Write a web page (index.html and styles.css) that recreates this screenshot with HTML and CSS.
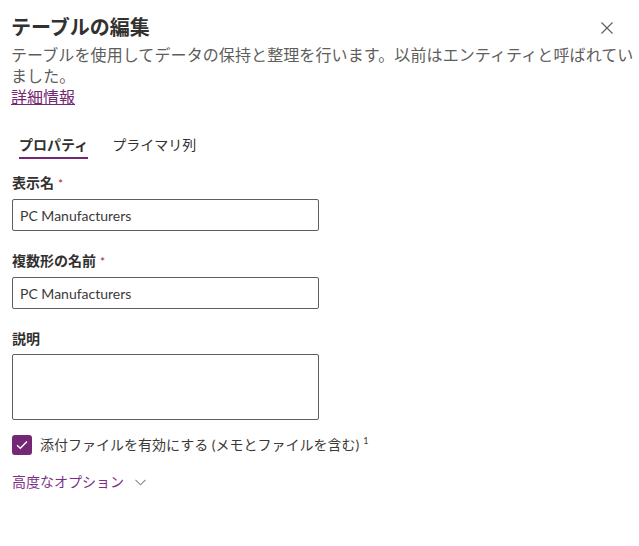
FILE: index.html
```html
<!DOCTYPE html>
<html lang="ja">
<head>
<meta charset="utf-8">
<title>テーブルの編集</title>
<link rel="stylesheet" href="styles.css">
</head>
<body>
<div class="panel">
  <header class="panel-header">
    <h1 class="panel-title">テーブルの編集</h1>
    <button class="close-btn" aria-label="閉じる">
      <svg width="12" height="12" viewBox="0 0 12 12"><path d="M0.5 0.5 L11.5 11.5 M11.5 0.5 L0.5 11.5" stroke="#605e5c" stroke-width="1.1" fill="none"/></svg>
    </button>
  </header>
  <p class="panel-desc">テーブルを使用してデータの保持と整理を行います。以前はエンティティと呼ばれていました。</p>
  <a class="learn-more" href="#">詳細情報</a>

  <nav class="tabs">
    <span class="tab tab-active">プロパティ</span>
    <span class="tab">プライマリ列</span>
  </nav>

  <div class="field">
    <label class="field-label">表示名<span class="req">*</span></label>
    <input class="text-input" type="text" value="PC Manufacturers">
  </div>

  <div class="field">
    <label class="field-label">複数形の名前<span class="req">*</span></label>
    <input class="text-input" type="text" value="PC Manufacturers">
  </div>

  <div class="field">
    <label class="field-label">説明</label>
    <textarea class="text-area"></textarea>
  </div>

  <div class="check-row">
    <span class="check-box">
      <svg width="12" height="10" viewBox="0 0 12 10"><path d="M1 5.2 L4.3 8.3 L11 1.5" stroke="#fff" stroke-width="1.4" fill="none"/></svg>
    </span>
    <span class="check-label">添付ファイルを有効にする (メモとファイルを含む)<sup class="note">1</sup></span>
  </div>

  <div class="advanced">
    <span>高度なオプション</span>
    <svg class="chev" width="11" height="7" viewBox="0 0 11 7"><path d="M0.5 0.8 L5.5 5.8 L10.5 0.8" stroke="#8a8886" stroke-width="1.1" fill="none"/></svg>
  </div>
</div>
</body>
</html>
```

FILE: styles.css
```css
* { box-sizing: border-box; }

body {
  margin: 0;
  background: #ffffff;
  font-family: Lato, "Noto Sans CJK JP", sans-serif;
  color: #323130;
}

.panel {
  padding: 13px 0 0 12px;
}

.panel-header {
  display: flex;
  justify-content: space-between;
  align-items: flex-start;
}

.panel-title {
  margin: 0 0 0 -1px;
  font-size: 20px;
  line-height: 28px;
  font-weight: 700;
  color: #323130;
}

.close-btn {
  border: 0;
  background: none;
  padding: 0;
  margin: 9px 26px 0 0;
  width: 12px;
  height: 12px;
  display: flex;
}

.panel-desc {
  margin: 3px 0 0 -1px;
  font-size: 16px;
  line-height: 21px;
  letter-spacing: 0.1px;
  color: #605e5c;
}

.learn-more {
  display: inline-block;
  margin-left: -1px;
  font-size: 16px;
  line-height: 22px;
  color: #742774;
  text-decoration: underline;
}

.tabs {
  display: flex;
  margin: 27px 0 9px 0;
}

.tab {
  position: relative;
  margin: 0 8px 0 0;
  padding: 0 8px 4px 8px;
  font-size: 14px;
  line-height: 20px;
  color: #323130;
}

.tab:first-child { margin-left: -1px; }

.tab-active { font-weight: 600; }

.tab-active::after {
  content: "";
  position: absolute;
  left: 8px;
  right: 8px;
  bottom: 0;
  height: 2px;
  background: #742774;
}

.field {
  display: flex;
  flex-direction: column;
  margin-bottom: 15px;
}

.field-label {
  padding: 5px 0;
  font-size: 14px;
  line-height: 20px;
  font-weight: 600;
  color: #323130;
}

.req {
  color: #a4262c;
  font-size: 12px;
  font-weight: 400;
  margin-left: 4px;
}

.text-input {
  width: 307px;
  height: 32px;
  border: 1px solid #605e5c;
  border-radius: 2px;
  padding: 0 7px;
  font: inherit;
  font-size: 14px;
  color: #3b3a39;
  outline: none;
}

.text-area {
  display: block;
  width: 307px;
  height: 66px;
  border: 1px solid #605e5c;
  border-radius: 2px;
  resize: none;
  font: inherit;
  outline: none;
}

.check-row {
  display: flex;
  align-items: center;
  margin-top: 1px;
}

.check-box {
  width: 20px;
  height: 20px;
  border-radius: 3px;
  background: #742774;
  display: flex;
  align-items: center;
  justify-content: center;
}

.check-label {
  margin-left: 8px;
  font-size: 14px;
  line-height: 20px;
  color: #3b3a39;
}

.note {
  font-size: 9px;
  margin-left: 4px;
  vertical-align: top;
  line-height: 12px;
}

.advanced {
  display: flex;
  align-items: center;
  margin-top: 17px;
  font-size: 14px;
  line-height: 20px;
  color: #7c3085;
}

.chev { margin-left: 11px; margin-top: 1px; }
```
